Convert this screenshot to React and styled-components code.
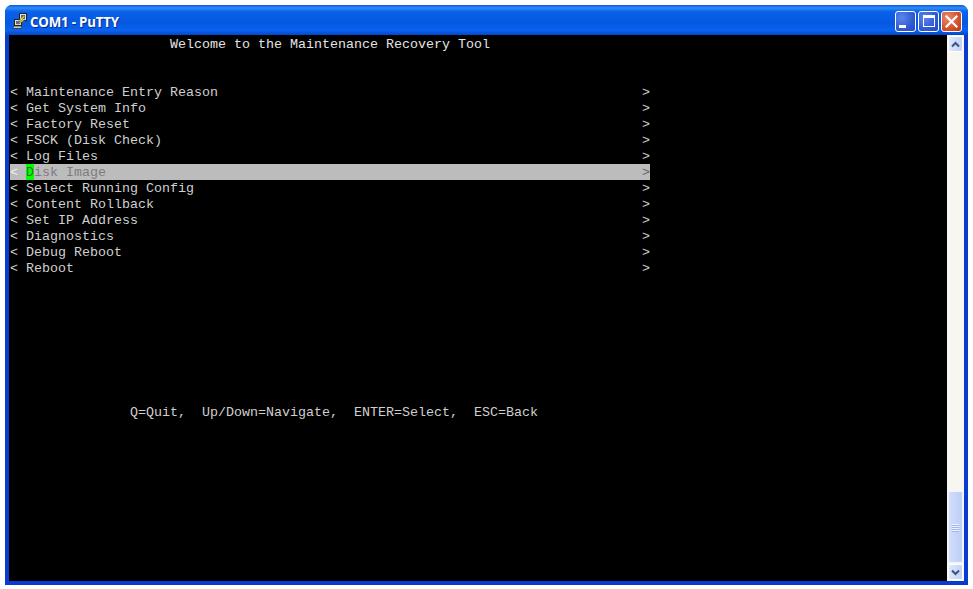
import React from 'react';
import styled, { createGlobalStyle } from 'styled-components';

const GlobalStyle = createGlobalStyle`
    html, body {
        margin: 0;
        padding: 0;
        background: #fff;
    }
`;

const menuItems = [
    'Maintenance Entry Reason',
    'Get System Info',
    'Factory Reset',
    'FSCK (Disk Check)',
    'Log Files',
    'Disk Image',
    'Select Running Config',
    'Content Rollback',
    'Set IP Address',
    'Diagnostics',
    'Debug Reboot',
    'Reboot',
];

const selectedItem = 'Disk Image';

// Putty icon, two little computers and a bolt.
const PuttyIcon = () => (
    <svg width="16" height="16" viewBox="0 0 16 16">
        <rect x="7.5" y="0.5" width="7" height="7" fill="#e0e0e0" stroke="#222" />
        <rect x="9" y="2" width="4" height="4" fill="#5f6c90" />
        <rect x="2.5" y="6.5" width="7" height="6" fill="#e0e0e0" stroke="#222" />
        <rect x="4" y="8" width="4" height="3" fill="#5f6c90" />
        <path d="M2 13h8l-1 2.5H0.5z" fill="#c4c4c4" stroke="#222" strokeWidth="0.7" />
        <path d="M11.5 3L7 7.5h2.5L6 11.5 12.5 7H10l3-4z" fill="#ffe83a" stroke="#6a5a00" strokeWidth="0.4" />
    </svg>
);

const App = () => (
    <>
        <GlobalStyle />
        <Window>
            <TitleBar>
                <PuttyIcon />
                <Title>COM1 - PuTTY</Title>
                <Controls>
                    <CaptionButton aria-label="Minimize">
                        <MinimizeGlyph />
                    </CaptionButton>
                    <CaptionButton aria-label="Maximize">
                        <MaximizeGlyph />
                    </CaptionButton>
                    <CaptionButton $close aria-label="Close">
                        <svg width="13" height="13" viewBox="0 0 13 13">
                            <path d="M1.5 1.5l10 10M11.5 1.5l-10 10" stroke="#fff" strokeWidth="2.2" strokeLinecap="square" fill="none" />
                        </svg>
                    </CaptionButton>
                </Controls>
            </TitleBar>
            <Client>
                <Terminal>
                    <Line $bright>{' '.repeat(20)}Welcome to the Maintenance Recovery Tool</Line>
                    <Line />
                    <Line />
                    {menuItems.map((item) => (
                        item === selectedItem ? (
                            <SelectedLine key={item}>
                                <span>{'< '}</span>
                                <Cursor>{item[0]}</Cursor>
                                <DimText>{item.slice(1)}</DimText>
                                <RightArrow $dim>&gt;</RightArrow>
                            </SelectedLine>
                        ) : (
                            <MenuLine key={item}>
                                <span>{'< ' + item}</span>
                                <RightArrow>&gt;</RightArrow>
                            </MenuLine>
                        )
                    ))}
                    <Hint>{' '.repeat(15)}Q=Quit,  Up/Down=Navigate,  ENTER=Select,  ESC=Back</Hint>
                </Terminal>
                <Scrollbar>
                    <ScrollButton>
                        <svg width="9" height="7" viewBox="0 0 9 7">
                            <path d="M1 5.5l3.5-3.5 3.5 3.5" stroke="#3b5488" strokeWidth="2" fill="none" />
                        </svg>
                    </ScrollButton>
                    <Track />
                    <Thumb>
                        <Grip />
                        <Grip />
                        <Grip />
                        <Grip />
                    </Thumb>
                    <ScrollButton>
                        <svg width="9" height="7" viewBox="0 0 9 7">
                            <path d="M1 1.5l3.5 3.5 3.5-3.5" stroke="#3b5488" strokeWidth="2" fill="none" />
                        </svg>
                    </ScrollButton>
                </Scrollbar>
            </Client>
        </Window>
    </>
);

const Window = styled.div`
    box-sizing: border-box;
    display: flex;
    flex-direction: column;
    width: 963px;
    height: 580px;
    margin: 5px;
    border-radius: 7px 7px 0 0;
    background: #0a3bd0;
`;

const TitleBar = styled.div`
    box-sizing: border-box;
    display: flex;
    align-items: center;
    flex: 0 0 30px;
    padding: 2px 6px 0 7px;
    border-radius: 7px 7px 0 0;
    background: linear-gradient(to bottom, #0a5ae0 0%, #2f8cf8 10%, #0a62ea 22%, #0558e0 60%, #0a62ee 85%, #0346c8 100%);
`;

const Title = styled.span`
    margin: 2px 0 0 2px;
    color: #fff;
    font-family: "Open Sans", "Liberation Sans", sans-serif;
    font-size: 13.3px;
    font-weight: 700;
    letter-spacing: -0.2px;
    text-shadow: 1px 1px 0 #0a2a90;
`;

const Controls = styled.div`
    display: flex;
    gap: 2px;
    margin-left: auto;
`;

const CaptionButton = styled.div`
    box-sizing: border-box;
    position: relative;
    display: flex;
    align-items: center;
    justify-content: center;
    width: 21px;
    height: 21px;
    border: 1px solid #fff;
    border-radius: 3px;
    background: ${(p) => (p.$close
        ? 'radial-gradient(circle at 30% 30%, #ea8a6c, #d2502c 60%, #b03a1c)'
        : 'radial-gradient(circle at 30% 30%, #5c86ec, #2f5ad4 60%, #2348c0)')};
`;

const MinimizeGlyph = styled.div`
    align-self: flex-end;
    width: 7px;
    height: 3px;
    margin: 0 7px 3px 0;
    background: #fff;
`;

const MaximizeGlyph = styled.div`
    box-sizing: border-box;
    width: 12px;
    height: 12px;
    border: 1px solid #fff;
    border-top-width: 3px;
`;

const Client = styled.div`
    display: flex;
    flex: 1;
    min-height: 0;
    padding: 0 4px 4px;
`;

const Terminal = styled.div`
    box-sizing: border-box;
    flex: 0 0 938px;
    padding: 1px 0 0 1px;
    background: #000;
    color: #cfcfcf;
    font-family: "Liberation Mono", "Courier New", monospace;
    font-size: 13.33px;
`;

const Line = styled.div`
    width: 640px;
    height: 16px;
    line-height: 18px;
    white-space: pre;
    color: ${(p) => (p.$bright ? '#e4e4e4' : 'inherit')};
`;

const MenuLine = styled(Line)`
    display: flex;
    justify-content: space-between;
`;

const SelectedLine = styled(Line)`
    display: flex;
    background: #bcbcbc;
    color: #f0f0f0;
`;

const Cursor = styled.span`
    background: #00ff00;
    color: #3c6e3c;
`;

const DimText = styled.span`
    color: #7c7c7c;
`;

const RightArrow = styled.span`
    margin-left: auto;
    color: ${(p) => (p.$dim ? '#666' : 'inherit')};
`;

const Hint = styled(Line)`
    margin-top: 128px;
`;

const Scrollbar = styled.div`
    box-sizing: border-box;
    display: flex;
    flex-direction: column;
    flex: 0 0 17px;
    padding: 1px 0;
    background: #f7f6f1;
`;

const ScrollButton = styled.div`
    box-sizing: border-box;
    display: flex;
    align-items: center;
    justify-content: center;
    flex: 0 0 16px;
    margin: 0 1px;
    border: 1px solid #fff;
    border-radius: 2px;
    background: linear-gradient(to right, #dfe8fb, #c2d2f6);
`;

const Track = styled.div`
    flex: 1;
`;

const Thumb = styled.div`
    box-sizing: border-box;
    display: flex;
    flex-direction: column;
    align-items: center;
    justify-content: center;
    gap: 1px;
    flex: 0 0 72px;
    margin: 0 1px 1px;
    border: 1px solid #f0f4ff;
    border-radius: 2px;
    background: linear-gradient(to right, #d4defa, #bccdf8);
`;

const Grip = styled.div`
    width: 7px;
    height: 1px;
    background: #eef2ff;
    box-shadow: 0 1px 0 #a4b8e8;
`;

export default App;
